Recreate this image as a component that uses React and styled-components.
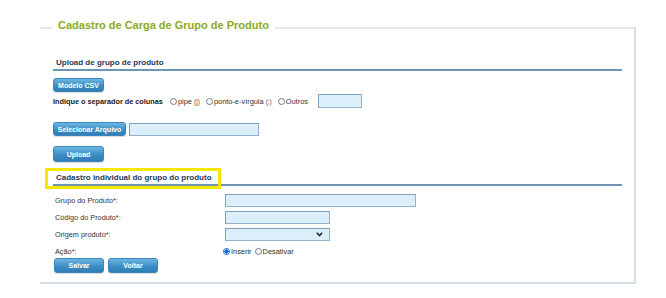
import React from 'react';
import styled, { createGlobalStyle } from 'styled-components';

const GlobalStyle = createGlobalStyle`
  body {
    margin: 0;
    background: #fff;
    font-family: "Liberation Sans", Arial, sans-serif;
    color: #333;
  }
`;

const Page = styled.div`
  padding-top: 18px;
  padding-left: 40px;
  width: 596px;
`;

const Frame = styled.fieldset`
  margin: 0;
  padding: 19px 12px 9px 13px;
  min-width: 0;
  border-top: 2px solid #e6e7e8;
  border-right: 2px solid #d9e1e8;
  border-bottom: 2px solid #d6dfe8;
  border-left: none;
`;

const Title = styled.legend`
  margin-left: -1px;
  padding: 0 6px 6px;
  font-size: 11px;
  line-height: 14px;
  font-weight: bold;
  color: #8aab1e;
`;

const SectionHeader = styled.div`
  position: relative;
  margin-top: ${(p) => p.$top || 0}px;
  padding-left: 3px;
  height: 12px;
  line-height: 12px;
  font-size: 8px;
  font-weight: bold;
  color: #1e3a58;
  border-bottom: 2px solid #6f95b6;
`;

const Highlight = styled.div`
  position: absolute;
  left: -8px;
  top: -4px;
  width: 170px;
  height: 15px;
  border: 3px solid #f6e900;
  pointer-events: none;
`;

const Button = styled.button`
  display: inline-flex;
  align-items: center;
  justify-content: center;
  box-sizing: border-box;
  margin: ${(p) => p.$margin || '0'};
  width: ${(p) => p.$width}px;
  height: ${(p) => p.$height || 14}px;
  padding: 0;
  border: 1px solid #3b85ba;
  border-radius: 3px;
  background: linear-gradient(#6cb6e2, #3d8fc6 55%, #2f7db4);
  box-shadow: 0 1px 1px rgba(0, 0, 0, 0.15);
  color: #fff;
  font-family: "Liberation Sans", Arial, sans-serif;
  font-size: 7px;
  font-weight: bold;
`;

const Row = styled.div`
  display: flex;
  align-items: center;
  margin-top: ${(p) => p.$top || 0}px;
  height: ${(p) => p.$height || 14}px;
`;

const BoldLabel = styled.span`
  font-size: 7.3px;
  font-weight: bold;
  color: #222;
  margin-right: ${(p) => p.$gap || 0}px;
`;

const Choice = styled.label`
  display: inline-flex;
  align-items: center;
  font-size: 7.4px;
  color: #333;
  margin-right: ${(p) => p.$gap || 0}px;
`;

const Small = styled.span`
  font-size: 6.5px;
  margin-left: 2px;
  color: #555;
`;

const Radio = styled.input.attrs({ type: 'radio' })`
  appearance: none;
  margin: 0 1px 0 0;
  width: 7px;
  height: 7px;
  box-sizing: border-box;
  border: 1px solid #7a7a7a;
  border-radius: 50%;
  background: #fff;

  &:checked {
    border-color: #1a66d2;
    background: radial-gradient(circle, #1a6bdc 0 2px, #fff 2.2px);
  }
`;

const TextBox = styled.input`
  box-sizing: border-box;
  width: ${(p) => p.$width}px;
  height: ${(p) => p.$height || 13}px;
  margin: ${(p) => p.$margin || '0'};
  padding: 0 2px;
  border: 1px solid #92b1cc;
  border-top-color: #7f9fbc;
  border-left-color: #7f9fbc;
  background: #ddeefb;
  outline: none;
`;

const SelectBox = styled.div`
  box-sizing: border-box;
  display: flex;
  align-items: center;
  justify-content: flex-end;
  width: ${(p) => p.$width}px;
  height: 13px;
  padding-right: 6px;
  border: 1px solid #92b1cc;
  border-top-color: #7f9fbc;
  border-left-color: #7f9fbc;
  background: #ddeefb;
`;

const FormGrid = styled.div`
  display: grid;
  grid-template-columns: 172px auto;
  grid-template-rows: 17px 17px 17px 13px;
  margin-top: 7.5px;
  margin-left: 2px;
`;

const FieldLabel = styled.div`
  height: 13px;
  line-height: 13px;
  font-size: 7.3px;
  color: #333;
`;

const FieldCell = styled.div`
  display: flex;
  align-items: flex-start;
  margin-left: -2px;
`;

const ActionCell = styled.div`
  display: flex;
  align-items: center;
  height: 13px;
  margin-left: -4px;
`;

const Chevron = () => (
  <svg width="7" height="5" viewBox="0 0 7 5">
    <path d="M0.8 0.8 L3.5 3.6 L6.2 0.8" fill="none" stroke="#222" strokeWidth="1.5" />
  </svg>
);

export default function App() {
  return (
    <>
      <GlobalStyle />
      <Page>
        <Frame>
          <Title>Cadastro de Carga de Grupo de Produto</Title>

          <SectionHeader>Upload de grupo de produto</SectionHeader>

          <Row $top={7}>
            <Button $width={51}>Modelo CSV</Button>
          </Row>

          <Row $top={2} $height={14}>
            <BoldLabel $gap={7}>Indique o separador de colunas</BoldLabel>
            <Choice $gap={6}>
              <Radio name="sep" />pipe<Small>(|)</Small>
            </Choice>
            <Choice $gap={6}>
              <Radio name="sep" />ponto-e-vírgula<Small>(;)</Small>
            </Choice>
            <Choice $gap={10}>
              <Radio name="sep" />Outros
            </Choice>
            <TextBox $width={44} $height={14} />
          </Row>

          <Row $top={14}>
            <Button $width={73}>Selecionar Arquivo</Button>
            <TextBox $width={130} $margin="0 0 0 3px" />
          </Row>

          <Row $top={10} $height={16}>
            <Button $width={51} $height={16}>Upload</Button>
          </Row>

          <SectionHeader $top={10}>
            Cadastro individual do grupo do produto
            <Highlight />
          </SectionHeader>

          <FormGrid>
            <FieldLabel>Grupo do Produto*:</FieldLabel>
            <FieldCell>
              <TextBox $width={191} />
            </FieldCell>
            <FieldLabel>Código do Produto*:</FieldLabel>
            <FieldCell>
              <TextBox $width={105} />
            </FieldCell>
            <FieldLabel>Origem produto*:</FieldLabel>
            <FieldCell>
              <SelectBox $width={105}>
                <Chevron />
              </SelectBox>
            </FieldCell>
            <FieldLabel>Ação*:</FieldLabel>
            <ActionCell>
              <Choice $gap={3}>
                <Radio name="acao" defaultChecked />Inserir
              </Choice>
              <Choice>
                <Radio name="acao" />Desativar
              </Choice>
            </ActionCell>
          </FormGrid>

          <Row $top={0.5} $height={15}>
            <Button $width={50} $height={15} $margin="0 4px 0 1px">Salvar</Button>
            <Button $width={50} $height={15}>Voltar</Button>
          </Row>
        </Frame>
      </Page>
    </>
  );
}
